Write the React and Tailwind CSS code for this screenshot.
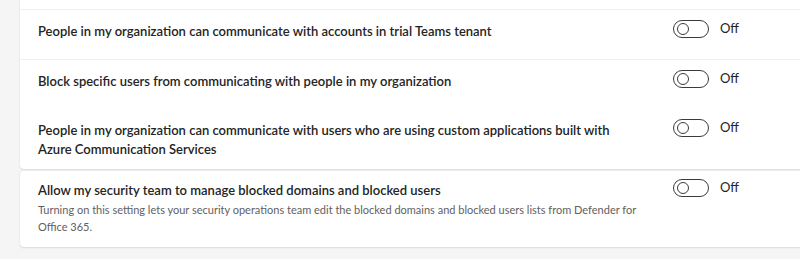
import React from "react";

function Toggle() {
  return (
    <div className="ml-[30px] mt-[-3px] flex shrink-0 items-center gap-[11px]">
      <div className="flex h-[18px] w-[36px] items-center rounded-full border border-[#3b3b3b] bg-white pl-[3px]">
        <div className="h-[12px] w-[12px] rounded-full border-[1.5px] border-[#3b3b3b] bg-white" />
      </div>
      <span className="text-[13px] leading-[19px] text-[#242424]">Off</span>
    </div>
  );
}

function Row({ title, desc, className }) {
  return (
    <div className={"flex items-start pl-[18px] " + className}>
      <div className="w-[605px] shrink-0">
        <div className="text-[13px] font-semibold leading-[19px] text-[#242424]">{title}</div>
        {desc && (
          <div className="mt-[1px] text-[11px] leading-[17px] text-[#616161]">{desc}</div>
        )}
      </div>
      <Toggle />
    </div>
  );
}

export default function App() {
  return (
    <div
      className="h-[259px] w-[800px] overflow-hidden bg-[#f5f5f5] pl-[20px]"
      style={{ fontFamily: "Lato, 'Liberation Sans', sans-serif" }}
    >
      <div className="w-[800px] rounded-b-[4px] bg-white shadow-[0_1px_2px_rgba(0,0,0,0.10),0_0_2px_rgba(0,0,0,0.06)]">
        <div className="h-[10px] border-b border-[#f0f0f0]" />
        <Row
          className="border-b border-[#f0f0f0] pt-[12px] pb-[18px]"
          title="People in my organization can communicate with accounts in trial Teams tenant"
        />
        <Row
          className="pt-[12px] pb-[18px]"
          title="Block specific users from communicating with people in my organization"
        />
        <Row
          className="pt-[12px] pb-[10px]"
          title="People in my organization can communicate with users who are using custom applications built with Azure Communication Services"
        />
      </div>
      <div className="mt-[2px] w-[800px] rounded-[4px] bg-white pt-[10px] pb-[12px] shadow-[0_1px_2px_rgba(0,0,0,0.10),0_0_2px_rgba(0,0,0,0.06)]">
        <Row
          title="Allow my security team to manage blocked domains and blocked users"
          desc="Turning on this setting lets your security operations team edit the blocked domains and blocked users lists from Defender for Office 365."
        />
      </div>
    </div>
  );
}
